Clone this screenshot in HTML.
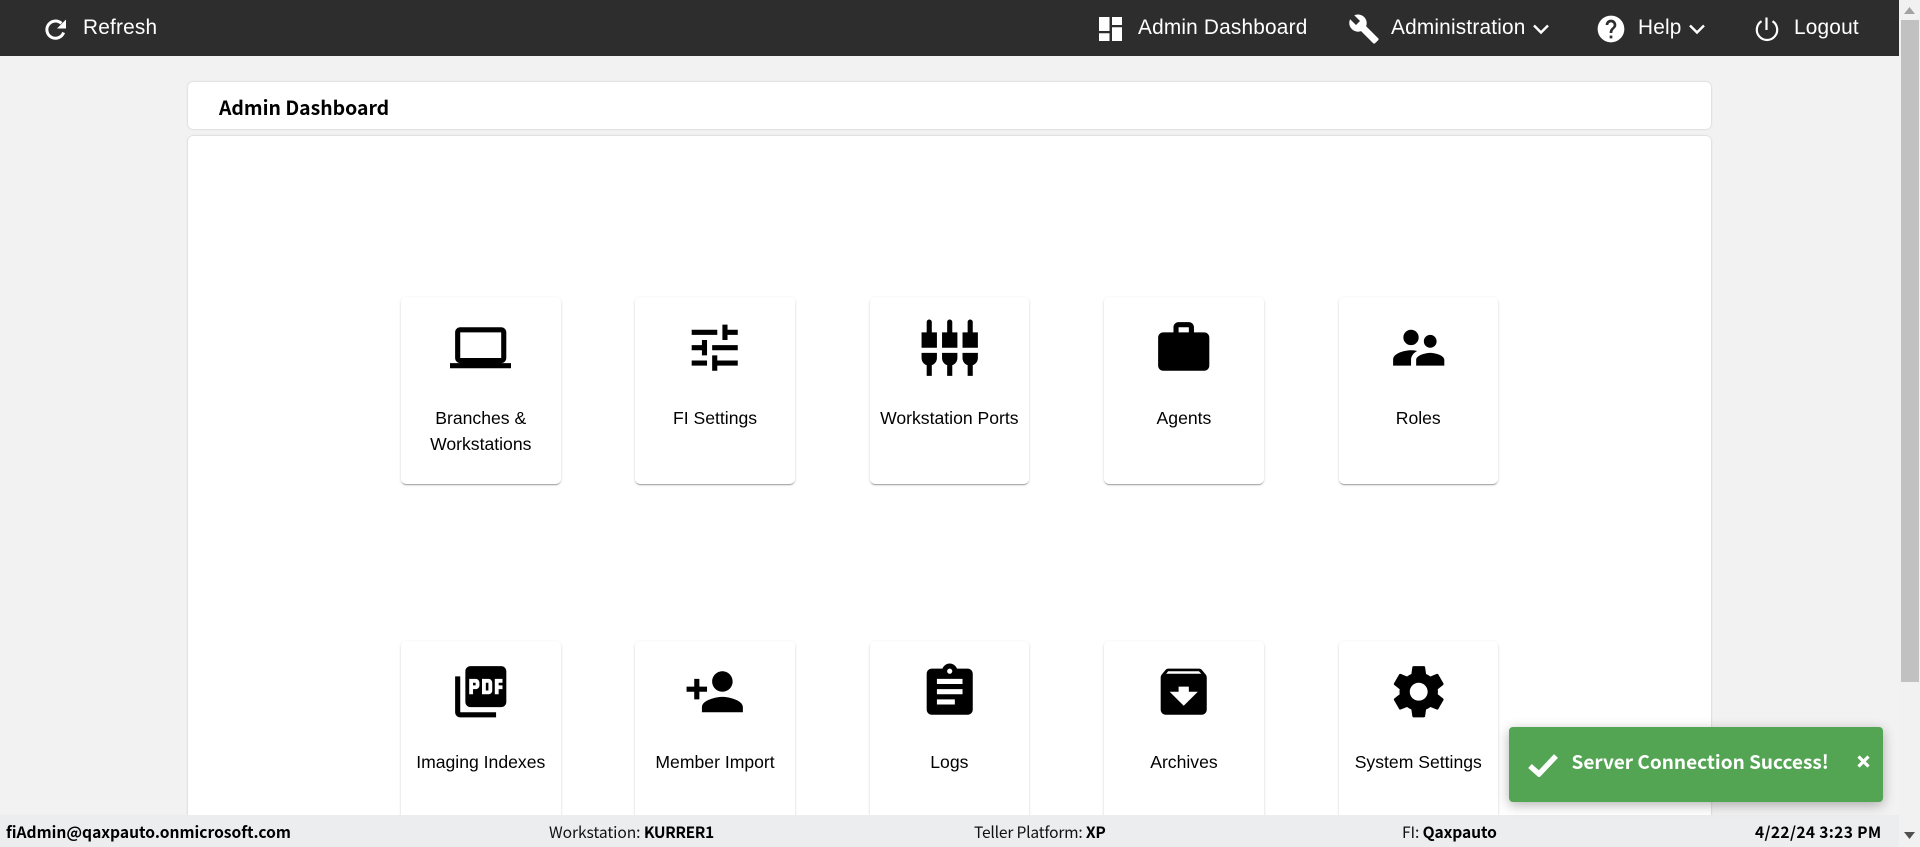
<!DOCTYPE html>
<html><head><meta charset="utf-8"><title>Admin Dashboard</title>
<style>
*{box-sizing:border-box}
html,body{margin:0;padding:0;width:1920px;height:847px;overflow:hidden;background:#f2f2f2;font-family:"Liberation Sans",Arial,sans-serif;color:#000}
#wrap{position:absolute;left:0;top:0;width:1920px;height:847px;overflow:hidden}
.abs,.nav,.f,.card,svg.i{position:absolute}
#top{position:absolute;left:0;top:0;width:1899px;height:56px;background:#2d2d2d}
.nav{color:#fff;font-size:20.8px;line-height:56px;top:0;white-space:nowrap;letter-spacing:.2px}
svg.n{position:absolute;fill:#fff}
.panel{position:absolute;left:188px;width:1523px;background:#fff;border-radius:5px;box-shadow:0 0 2px rgba(0,0,0,.2)}
.h{position:absolute;left:219px;top:94px;font:700 19.4px/26px "Noto Sans CJK JP","Liberation Sans",sans-serif;white-space:nowrap}
.card{width:159.5px;height:187px;background:#fff;border-radius:5px;box-shadow:0 2px 1px -1px rgba(0,0,0,.2),0 1px 1px 0 rgba(0,0,0,.14),0 1px 3px 0 rgba(0,0,0,.12)}
.card svg{position:absolute;left:49px;top:20px;width:61.44px;height:61.44px;fill:#000}
.card div{position:absolute;left:0;right:0;top:108px;text-align:center;font-size:17.6px;line-height:26px}
#foot{position:absolute;left:0;top:815px;width:1899px;height:32px;background:#ecedef}
.f{top:816px;height:32px;font:400 15.6px/32px "Noto Sans CJK JP","Liberation Sans",sans-serif;white-space:nowrap;color:#111}
.f b{font-weight:700;color:#000}
#sb{position:absolute;left:1899px;top:0;width:21px;height:847px;background:#f1f1f1}
#th{position:absolute;left:2px;top:20px;width:18px;height:662px;background:#c1c1c1}
#toast{position:absolute;left:1509px;top:727px;width:375px;height:75px;background:#53a453;border-radius:4px;box-shadow:0 3px 12px rgba(0,0,0,.3)}
#toast span{position:absolute;left:62.5px;top:20px;color:#fff;font:700 19px/30px "Noto Sans CJK JP","Liberation Sans",sans-serif;white-space:nowrap}
</style></head><body><div id="wrap">
<div id="top"></div>
<svg class="n" style="left:43px;top:17px" width="25" height="24" viewBox="0 0 25 24"><path d="M18.4 6.4A8.6 8.6 0 1 0 20.6 15.5" fill="none" stroke="#fff" stroke-width="3"/><path d="M14 11.5H23V2.5z"/></svg>
<div class="nav" style="left:83px">Refresh</div>
<svg class="n" style="left:1099px;top:17px" width="24" height="24" viewBox="0 0 24 24"><path d="M0 0h10.5v14H0zM0 16.3h10.5V24H0zM13 0h10v8H13zM13 10.3h10V24H13z"/></svg>
<div class="nav" style="left:1138px">Admin Dashboard</div>
<svg class="n" style="left:1347.5px;top:13px" width="32" height="32" viewBox="0 0 24 24"><path d="M22.7 19l-9.1-9.1c.9-2.3.4-5-1.5-6.9-2-2-5-2.4-7.4-1.3L9 6 6 9 1.6 4.7C.4 7.1.9 10.1 2.9 12.1c1.9 1.9 4.6 2.4 6.9 1.5l9.1 9.1c.4.4 1 .4 1.4 0l2.3-2.3c.5-.4.5-1.1.1-1.4z"/></svg>
<div class="nav" style="left:1391px">Administration</div>
<svg class="n" style="left:1532px;top:22.5px;fill:none" width="18" height="12" viewBox="0 0 18 12"><path d="M2 2.5l7 7 7-7" stroke="#fff" stroke-width="2.4" fill="none"/></svg>
<svg class="n" style="left:1594.5px;top:13px" width="32" height="32" viewBox="0 0 24 24"><path d="M12 2C6.48 2 2 6.48 2 12s4.48 10 10 10 10-4.48 10-10S17.52 2 12 2zm1 17h-2v-2h2v2zm2.07-7.75l-.9.92C13.45 12.9 13 13.5 13 15h-2v-.5c0-1.1.45-2.1 1.17-2.83l1.24-1.26c.37-.36.59-.86.59-1.41 0-1.1-.9-2-2-2s-2 .9-2 2H8c0-2.21 1.79-4 4-4s4 1.79 4 4c0 .88-.36 1.68-.93 2.25z"/></svg>
<div class="nav" style="left:1638px">Help</div>
<svg class="n" style="left:1688px;top:22.5px;fill:none" width="18" height="12" viewBox="0 0 18 12"><path d="M2 2.5l7 7 7-7" stroke="#fff" stroke-width="2.4" fill="none"/></svg>
<svg class="n" style="left:1754px;top:16px;fill:none" width="26" height="26" viewBox="0 0 26 26"><path d="M7.5 5.2A10.2 10.2 0 1 0 18.5 5.2" fill="none" stroke="#fff" stroke-width="2.2"/><path d="M12.5 1.5v12.5" stroke="#fff" stroke-width="2.2"/></svg>
<div class="nav" style="left:1794px">Logout</div>

<div class="panel" style="top:82px;height:47px"></div>
<div class="h">Admin Dashboard</div>
<div class="panel" style="top:136px;height:720px"></div>

<div class="card" style="left:401px;top:297px"><svg viewBox="0 0 24 24"><path d="M20 18c1.1 0 1.99-.9 1.99-2L22 6c0-1.1-.9-2-2-2H4c-1.1 0-2 .9-2 2v10c0 1.1.9 2 2 2H0v2h24v-2h-4zM4 6h16v10H4V6z"/></svg><div>Branches &amp;<br>Workstations</div></div>
<div class="card" style="left:635.3px;top:297px"><svg viewBox="0 0 24 24"><path d="M3 17v2h6v-2H3zM3 5v2h10V5H3zm10 16v-2h8v-2h-8v-2h-2v6h2zM7 9v2H3v2h4v2h2V9H7zm14 4v-2H11v2h10zm-6-4h2V7h4V5h-4V3h-2v6z"/></svg><div>FI Settings</div></div>
<div class="card" style="left:869.6px;top:297px"><svg viewBox="0 0 24 24"><path d="M5 2c0-.55-.45-1-1-1s-1 .45-1 1v4H1v6h6V6H5V2zm4 14c0 1.3.84 2.4 2 2.82V23h2v-4.18c1.16-.41 2-1.51 2-2.82v-2H9v2zm-8 0c0 1.3.84 2.4 2 2.82V23h2v-4.18C6.16 18.4 7 17.3 7 16v-2H1v2zM21 6V2c0-.55-.45-1-1-1s-1 .45-1 1v4h-2v6h6V6h-2zm-8-4c0-.55-.45-1-1-1s-1 .45-1 1v4H9v6h6V6h-2V2zm4 14c0 1.3.84 2.4 2 2.82V23h2v-4.18c1.16-.41 2-1.51 2-2.82v-2h-6v2z"/></svg><div>Workstation Ports</div></div>
<div class="card" style="left:1104.2px;top:297px"><svg viewBox="0 0 24 24"><path d="M20 6h-4V4c0-1.11-.89-2-2-2h-4c-1.11 0-2 .89-2 2v2H4c-1.11 0-1.99.89-1.99 2L2 19c0 1.11.89 2 2 2h16c1.11 0 2-.89 2-2V8c0-1.11-.89-2-2-2zm-6 0h-4V4h4v2z"/></svg><div>Agents</div></div>
<div class="card" style="left:1338.5px;top:297px"><svg viewBox="0 0 24 24"><path d="M16.5 12c1.38 0 2.49-1.12 2.49-2.5S17.88 7 16.5 7C15.12 7 14 8.12 14 9.5s1.12 2.5 2.5 2.5zM9 11c1.66 0 2.99-1.34 2.99-3S10.66 5 9 5C7.34 5 6 6.34 6 8s1.34 3 3 3zm7.5 3c-1.83 0-5.5.92-5.5 2.75V19h11v-2.25c0-1.83-3.67-2.75-5.5-2.75zM9 13c-2.33 0-7 1.17-7 3.5V19h7v-2.25c0-.85.33-2.34 2.37-3.47C10.5 13.1 9.66 13 9 13z"/></svg><div>Roles</div></div>

<div class="card" style="left:401px;top:641px"><svg viewBox="0 0 24 24"><path d="M20 2H8c-1.1 0-2 .9-2 2v12c0 1.1.9 2 2 2h12c1.1 0 2-.9 2-2V4c0-1.1-.9-2-2-2zm-8.5 7.5c0 .83-.67 1.5-1.5 1.5H9v2H7.5V7H10c.83 0 1.5.67 1.5 1.5v1zm5 2c0 .83-.67 1.5-1.5 1.5h-2.5V7H15c.83 0 1.5.67 1.5 1.5v3zm4-3H19v1h1.5V11H19v2h-1.5V7h3v1.5zM9 9.5h1v-1H9v1zM4 6H2v14c0 1.1.9 2 2 2h14v-2H4V6zm10 5.5h1v-3h-1v3z"/></svg><div>Imaging Indexes</div></div>
<div class="card" style="left:635.3px;top:641px"><svg viewBox="0 0 24 24"><path d="M15 12c2.21 0 4-1.79 4-4s-1.79-4-4-4-4 1.79-4 4 1.79 4 4 4zm-9-2V7H4v3H1v2h3v3h2v-3h3v-2H6zm9 4c-2.67 0-8 1.34-8 4v2h16v-2c0-2.66-5.33-4-8-4z"/></svg><div>Member Import</div></div>
<div class="card" style="left:869.6px;top:641px"><svg viewBox="0 0 24 24"><path d="M19 3h-4.18C14.4 1.84 13.3 1 12 1c-1.3 0-2.4.84-2.82 2H5c-1.1 0-2 .9-2 2v14c0 1.1.9 2 2 2h14c1.1 0 2-.9 2-2V5c0-1.1-.9-2-2-2zm-7 0c.55 0 1 .45 1 1s-.45 1-1 1-1-.45-1-1 .45-1 1-1zm2 14H7v-2h7v2zm3-4H7v-2h10v2zm0-4H7V7h10v2z"/></svg><div>Logs</div></div>
<div class="card" style="left:1104.2px;top:641px"><svg viewBox="0 0 24 24"><path d="M20.54 5.23l-1.39-1.68C18.88 3.21 18.47 3 18 3H6c-.47 0-.88.21-1.16.55L3.46 5.23C3.17 5.57 3 6.02 3 6.5V19c0 1.1.9 2 2 2h14c1.1 0 2-.9 2-2V6.5c0-.48-.17-.93-.46-1.27zM12 17.5L6.5 12H10v-2h4v2h3.5L12 17.5zM5.12 5l.81-1h12l.94 1H5.12z"/></svg><div>Archives</div></div>
<div class="card" style="left:1338.5px;top:641px"><svg viewBox="0 0 24 24"><path d="M19.43 12.98c.04-.32.07-.64.07-.98s-.03-.66-.07-.98l2.11-1.65c.19-.15.24-.42.12-.64l-2-3.46c-.12-.22-.39-.3-.61-.22l-2.49 1c-.52-.4-1.08-.73-1.69-.98l-.38-2.65C14.46 2.18 14.25 2 14 2h-4c-.25 0-.46.18-.49.42l-.38 2.65c-.61.25-1.17.59-1.69.98l-2.49-1c-.23-.09-.49 0-.61.22l-2 3.46c-.13.22-.07.49.12.64l2.11 1.65c-.04.32-.07.65-.07.98s.03.66.07.98l-2.11 1.65c-.19.15-.24.42-.12.64l2 3.46c.12.22.39.3.61.22l2.49-1c.52.4 1.08.73 1.69.98l.38 2.65c.03.24.24.42.49.42h4c.25 0 .46-.18.49-.42l.38-2.65c.61-.25 1.17-.59 1.69-.98l2.49 1c.23.09.49 0 .61-.22l2-3.46c.12-.22.07-.49-.12-.64l-2.11-1.65zM12 15.5c-1.93 0-3.5-1.57-3.5-3.5s1.57-3.5 3.5-3.5 3.5 1.57 3.5 3.5-1.57 3.5-3.5 3.5z"/></svg><div>System Settings</div></div>

<div id="foot"></div>
<div class="f" style="left:6px"><b>fiAdmin@qaxpauto.onmicrosoft.com</b></div>
<div class="f" style="left:549px;letter-spacing:-.07px">Workstation: <b style="letter-spacing:-.4px">KURRER1</b></div>
<div class="f" style="left:974px;letter-spacing:-.2px">Teller Platform: <b>XP</b></div>
<div class="f" style="left:1402px;letter-spacing:-.1px">FI: <b>Qaxpauto</b></div>
<div class="f" style="left:1755px"><b style="letter-spacing:.33px">4/22/24 3:23 PM</b></div>

<div id="toast" style="width:374px">
<svg style="position:absolute;left:19px;top:26px" width="30" height="24" viewBox="0 0 30 24"><path d="M2 13l9 8L28 3" fill="none" stroke="#fff" stroke-width="5.4"/></svg>
<span>Server Connection Success!</span>
<svg style="position:absolute;left:348px;top:28px" width="13" height="13" viewBox="0 0 13 13"><path d="M1.5 1.5l10 10M11.5 1.5l-10 10" stroke="#fff" stroke-width="3.2"/></svg>
</div>

<div id="sb"><div id="th"></div>
<svg style="position:absolute;left:5px;top:7px" width="11" height="7"><path d="M5.5 0L11 7H0z" fill="#a3a3a3"/></svg>
<svg style="position:absolute;left:5px;top:832px" width="11" height="7"><path d="M0 0h11L5.5 7z" fill="#505050"/></svg>
</div>
</div></body></html>
